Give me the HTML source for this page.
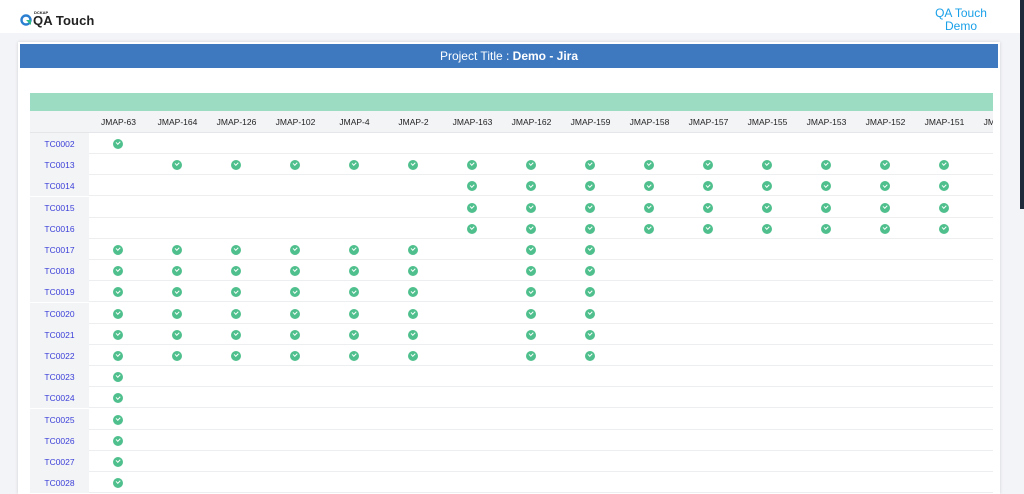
<!DOCTYPE html>
<html><head><style>
html,body{margin:0;width:1024px;height:494px;overflow:hidden}
body{background:#f3f4f7;font-family:"Liberation Sans",sans-serif;position:relative}
.hdr{position:absolute;left:0;top:0;width:1024px;height:33px;background:#fff}
.logo{position:absolute;left:20px;top:10px}
.demo{position:absolute;left:926px;top:7px;width:70px;text-align:center;color:#1aa0e8;font-size:12px;line-height:12.5px}
.sb{position:absolute;left:1020px;top:0;width:4px;height:209px;background:#1c2a3a}
.card{position:absolute;left:18px;top:42px;width:982px;height:452px;background:#fff;box-shadow:0 0 3px rgba(0,0,0,.15)}
.blue{position:absolute;left:2px;top:2px;width:978px;height:24px;background:#3e79c0;color:#fff;font-size:12px;text-align:center;line-height:24px}
.green{position:absolute;left:12px;top:51px;width:963px;height:18px;background:#9bdcc3}
.tbl{position:absolute;left:12px;top:69px;width:963px;height:400px;overflow:hidden}
.row{position:absolute;left:0;height:21px;width:1000px;border-bottom:1px solid #eceef0;box-sizing:border-box}
.lc{position:absolute;left:0;top:0;width:59px;height:21px;background:#f3f4f6;color:#3b3fd8;font-size:8.5px;line-height:22px;text-align:center}
.h{position:absolute;top:1px;font-size:8.5px;color:#222;line-height:21px;width:59px;text-align:center}
.c{position:absolute;top:6px;width:10px;height:10px;border-radius:50%;background:#4fc08d}
.c:after{content:"";position:absolute;left:3px;top:2.3px;width:3px;height:1.6px;border-left:1px solid #fff;border-bottom:1px solid #fff;transform:rotate(-45deg)}
</style></head><body>
<div class="hdr">
<div class="logo"><svg width="12" height="12" viewBox="0 0 12 12" style="position:absolute;left:0;top:4px"><circle cx="6" cy="6" r="4.5" fill="none" stroke="#2b7fd0" stroke-width="2.4"/><path d="M6 6 L11 11 L11 6Z" fill="#2fb88a"/></svg>
<div style="position:absolute;left:14px;top:0;font-size:4px;font-weight:bold;color:#222">DCKAP</div>
<div style="position:absolute;left:13px;top:3px;font-size:13px;font-weight:bold;color:#222;white-space:nowrap;letter-spacing:.1px">QA Touch</div></div>
<div class="demo">QA Touch<br>Demo</div>
</div>
<div class="sb"></div>
<div class="card">
<div class="blue">Project Title : <b>Demo - Jira</b></div>
<div class="green"></div>
<div class="tbl" id="t"></div>
</div>
<script>
var cols=["JMAP-63","JMAP-164","JMAP-126","JMAP-102","JMAP-4","JMAP-2","JMAP-163","JMAP-162","JMAP-159","JMAP-158","JMAP-157","JMAP-155","JMAP-153","JMAP-152","JMAP-151","JMAP-150"];
var rows=[["TC0002",[0]],["TC0013",[1,2,3,4,5,6,7,8,9,10,11,12,13,14]],["TC0014",[6,7,8,9,10,11,12,13,14]],["TC0015",[6,7,8,9,10,11,12,13,14]],["TC0016",[6,7,8,9,10,11,12,13,14]]];
for(var i=17;i<=22;i++)rows.push(["TC00"+i,[0,1,2,3,4,5,7,8]]);
for(var i=23;i<=28;i++)rows.push(["TC00"+i,[0]]);
var h='<div class="row" style="top:0;height:22px;background:#f3f4f6;border-bottom:1px solid #e4e6e9">';
cols.forEach(function(c,j){h+='<div class="h" style="left:'+(59+j*59)+'px">'+c+'</div>'});
h+='</div>';
rows.forEach(function(r,i){h+='<div class="row" style="top:'+(22+i*21.2)+'px"><div class="lc">'+r[0]+'</div>';
r[1].forEach(function(j){h+='<div class="c" style="left:'+(83+j*59)+'px"></div>'});h+='</div>'});
document.getElementById('t').innerHTML=h;
</script>
</body></html>
